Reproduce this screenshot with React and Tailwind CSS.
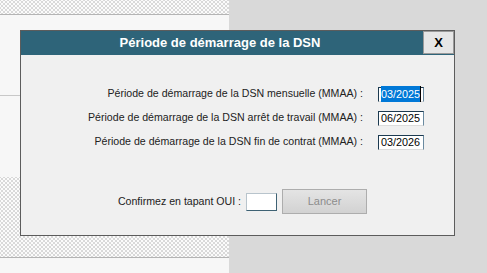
const dots =
  "bg-[#fbfbfb] bg-[radial-gradient(#b0b0b0_0.6px,transparent_0.8px),radial-gradient(#b0b0b0_0.6px,transparent_0.8px)] bg-[length:4px_4px] bg-[position:0_0,2px_2px]";

const rows = [
  { label: "Période de démarrage de la DSN mensuelle (MMAA) :", value: "03/2025", selected: true },
  { label: "Période de démarrage de la DSN arrêt de travail (MMAA) :", value: "06/2025" },
  { label: "Période de démarrage de la DSN fin de contrat (MMAA) :", value: "03/2026" },
];

const App = () => {
  return (
    <div className="relative w-[487px] h-[273px] flex overflow-hidden font-['Liberation_Sans',Tahoma,sans-serif]">
      {/* background page */}
      <div className="w-[229px] flex flex-col bg-[#f7f7f7]">
        <div className={`h-[14px] ${dots}`} />
        <div className="h-px bg-[#b4b4b4]" />
        <div className="h-[80px]" />
        <div className="h-px bg-[#c8c8c8]" />
        <div className="h-[81px]" />
        <div className={`h-[80px] ${dots}`} />
        <div className="h-px bg-[#b4b4b4]" />
        <div className="flex-1" />
      </div>
      <div className="flex-1 bg-[#d9d9d9]" />

      {/* dialog */}
      <div className="absolute left-[20px] top-[30px] w-[435px] h-[206px] border border-[#5c5c5c] bg-[#f0f0f0] flex flex-col">
        <div className="h-[24px] bg-[#2e6479] flex items-center relative">
          <div className="flex-1 text-center text-white font-bold text-[13px] pr-[4px]">
            Période de démarrage de la DSN
          </div>
          <button className="w-[31px] h-[23px] self-start bg-[#e6e6e6] border border-[#9a9a9a] text-black font-bold text-[13px] leading-none flex items-center justify-center">
            X
          </button>
        </div>

        <div className="flex flex-col gap-[10px] pt-[32px] pr-[30px] text-[10.6px] text-[#222]">
          {rows.map((row) => (
            <div key={row.value + row.label} className="flex items-center justify-end gap-[15px] h-[14px]">
              <span>{row.label}</span>
              <div className="w-[46px] h-[15px] bg-white border-l border-t border-[#1c3a50] border-r-[#6a8aa0] border-r border-b border-b-[#dcdcdc] flex items-center pl-[2px] text-[10.8px] text-black">
                {row.selected ? (
                  <span className="bg-[#0078d7] text-white border-r border-black">{row.value}</span>
                ) : (
                  row.value
                )}
              </div>
            </div>
          ))}
        </div>

        <div className="flex items-center justify-end pr-[87px] pt-[40px] text-[10.6px] text-[#222]">
          <span className="mr-[5px]">Confirmez en tapant OUI :</span>
          <div className="w-[31px] h-[18px] bg-white border border-[#b8c4cc] border-r-[#3e6274] border-b-[#3e6274] mr-[5px]" />
          <button className="w-[85px] h-[25px] border border-[#adadad] bg-[linear-gradient(#e4e4e4,#d2d2d2)] text-[#8c8c8c] text-[11px]">
            Lancer
          </button>
        </div>
      </div>
    </div>
  );
};

export default App;
